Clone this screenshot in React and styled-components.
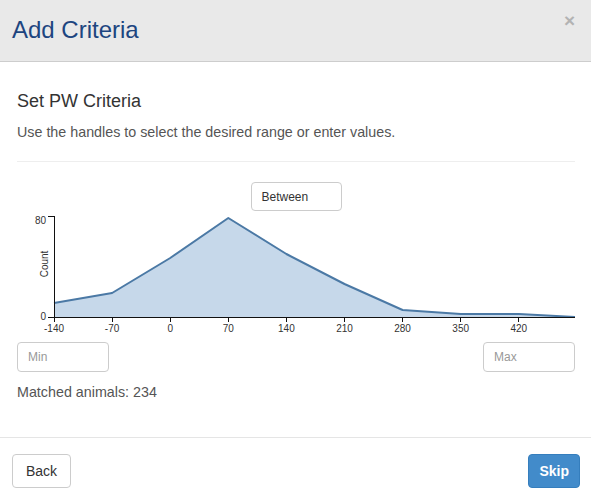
import React from "react";
import styled, { createGlobalStyle } from "styled-components";

const GlobalStyle = createGlobalStyle`
  html, body {
    margin: 0;
    padding: 0;
    background: #fff;
  }
  body {
    font-family: "Liberation Sans", Arial, sans-serif;
    color: #333;
  }
  * {
    box-sizing: border-box;
  }
`;

const points = [
  { v: -140, y: 92 },
  { v: -70, y: 82 },
  { v: 0, y: 47 },
  { v: 70, y: 7 },
  { v: 140, y: 43 },
  { v: 210, y: 73 },
  { v: 280, y: 99 },
  { v: 350, y: 103 },
  { v: 420, y: 103 },
  { v: 490, y: 106 },
];

const ticks = [-140, -70, 0, 70, 140, 210, 280, 350, 420];

const AXIS_X = 37;
const AXIS_TOP = 5;
const AXIS_BOTTOM = 106;
const xOf = (v) => AXIS_X + ((v + 140) / 70) * 58.1;

export default function App() {
  const line = points.map((p, i) => `${i ? "L" : "M"}${xOf(p.v)},${p.y}`).join(" ");
  const area = `${line} L${xOf(490)},${AXIS_BOTTOM} L${AXIS_X},${AXIS_BOTTOM} Z`;

  return (
    <>
      <GlobalStyle />
      <Modal>
        <Header>
          <Title>Add Criteria</Title>
          <Close>×</Close>
        </Header>
        <Body>
          <Heading>Set PW Criteria</Heading>
          <Hint>Use the handles to select the desired range or enter values.</Hint>
          <Rule />
          <ModeRow>
            <ModeBox>Between</ModeBox>
          </ModeRow>
          <Chart width="558" height="131" viewBox="0 0 558 131">
            <path d={area} fill="#c6d8ea" />
            <path d={line} fill="none" stroke="#4b79a5" strokeWidth="2" strokeLinejoin="round" />
            <g stroke="#111" strokeWidth="1" shapeRendering="crispEdges">
              <line x1={AXIS_X} y1={AXIS_TOP} x2={AXIS_X} y2={AXIS_BOTTOM} />
              <line x1={AXIS_X - 6} y1={AXIS_TOP} x2={AXIS_X} y2={AXIS_TOP} />
              <line x1={AXIS_X - 6} y1={AXIS_BOTTOM} x2={AXIS_X} y2={AXIS_BOTTOM} />
              <line x1={AXIS_X} y1={AXIS_BOTTOM} x2={xOf(490)} y2={AXIS_BOTTOM} />
              {ticks.map((t) => (
                <line key={t} x1={xOf(t)} y1={AXIS_BOTTOM} x2={xOf(t)} y2={AXIS_BOTTOM + 5} />
              ))}
            </g>
            <g fill="#333" fontSize="10" fontFamily="Liberation Sans, Arial, sans-serif">
              <text x={AXIS_X - 8} y={AXIS_TOP + 8} textAnchor="end">80</text>
              <text x={AXIS_X - 8} y={AXIS_BOTTOM + 3} textAnchor="end">0</text>
              <text transform={`translate(31,53) rotate(-90)`} textAnchor="middle">Count</text>
              {ticks.map((t) => (
                <text key={t} x={xOf(t)} y={AXIS_BOTTOM + 15} textAnchor="middle">{t}</text>
              ))}
            </g>
          </Chart>
          <RangeRow>
            <RangeInput placeholder="Min" />
            <RangeInput placeholder="Max" />
          </RangeRow>
          <Matched>Matched animals: 234</Matched>
        </Body>
        <Footer>
          <Button>Back</Button>
          <Button primary>Skip</Button>
        </Footer>
      </Modal>
    </>
  );
}

const Modal = styled.div`
  width: 591px;
  background: #fff;
`;

const Header = styled.div`
  height: 62px;
  display: flex;
  align-items: center;
  justify-content: space-between;
  padding: 0 16px 2px 12px;
  background: #e9e9e9;
  border-bottom: 1px solid #cdcdcd;
`;

const Title = styled.h3`
  margin: 0;
  font-size: 24px;
  font-weight: normal;
  line-height: 26px;
  color: #1d4580;
`;

const Close = styled.span`
  font-size: 19px;
  font-weight: bold;
  line-height: 1;
  color: #b3b3b3;
  margin-top: -18px;
  cursor: pointer;
`;

const Body = styled.div`
  padding: 29px 16px 35px 17px;
`;

const Heading = styled.h4`
  margin: 0 0 11px;
  font-size: 18px;
  font-weight: normal;
  line-height: 20px;
  color: #333;
`;

const Hint = styled.p`
  margin: 0;
  font-size: 14.3px;
  line-height: 20px;
  color: #555;
`;

const Rule = styled.hr`
  margin: 19px 0 20px;
  border: 0;
  border-top: 1px solid #eee;
`;

const ModeRow = styled.div`
  display: flex;
  justify-content: center;
`;

const ModeBox = styled.div`
  width: 91px;
  height: 29px;
  padding: 0 10px;
  display: flex;
  align-items: center;
  border: 1px solid #ccc;
  border-radius: 4px;
  font-size: 12px;
  color: #333;
`;

const Chart = styled.svg`
  display: block;
`;

const RangeRow = styled.div`
  display: flex;
  justify-content: space-between;
`;

const RangeInput = styled.input`
  width: 92px;
  height: 30px;
  padding: 0 10px;
  border: 1px solid #ccc;
  border-radius: 4px;
  font-family: "Liberation Sans", Arial, sans-serif;
  font-size: 12px;
  color: #333;
  outline: none;
  &::placeholder {
    color: #999;
  }
`;

const Matched = styled.div`
  margin-top: 10px;
  font-size: 14.3px;
  line-height: 20px;
  color: #555;
`;

const Footer = styled.div`
  display: flex;
  justify-content: space-between;
  padding: 16px 11px 15px 12px;
  border-top: 1px solid #e5e5e5;
`;

const Button = styled.button`
  height: 34px;
  padding: 0 ${(p) => (p.primary ? "10px" : "13px")};
  border: 1px solid ${(p) => (p.primary ? "#357ebd" : "#ccc")};
  border-radius: 4px;
  background: ${(p) => (p.primary ? "#428bca" : "#fff")};
  color: ${(p) => (p.primary ? "#fff" : "#333")};
  font-family: "Liberation Sans", Arial, sans-serif;
  font-size: 14px;
  font-weight: ${(p) => (p.primary ? "bold" : "normal")};
  cursor: pointer;
`;
